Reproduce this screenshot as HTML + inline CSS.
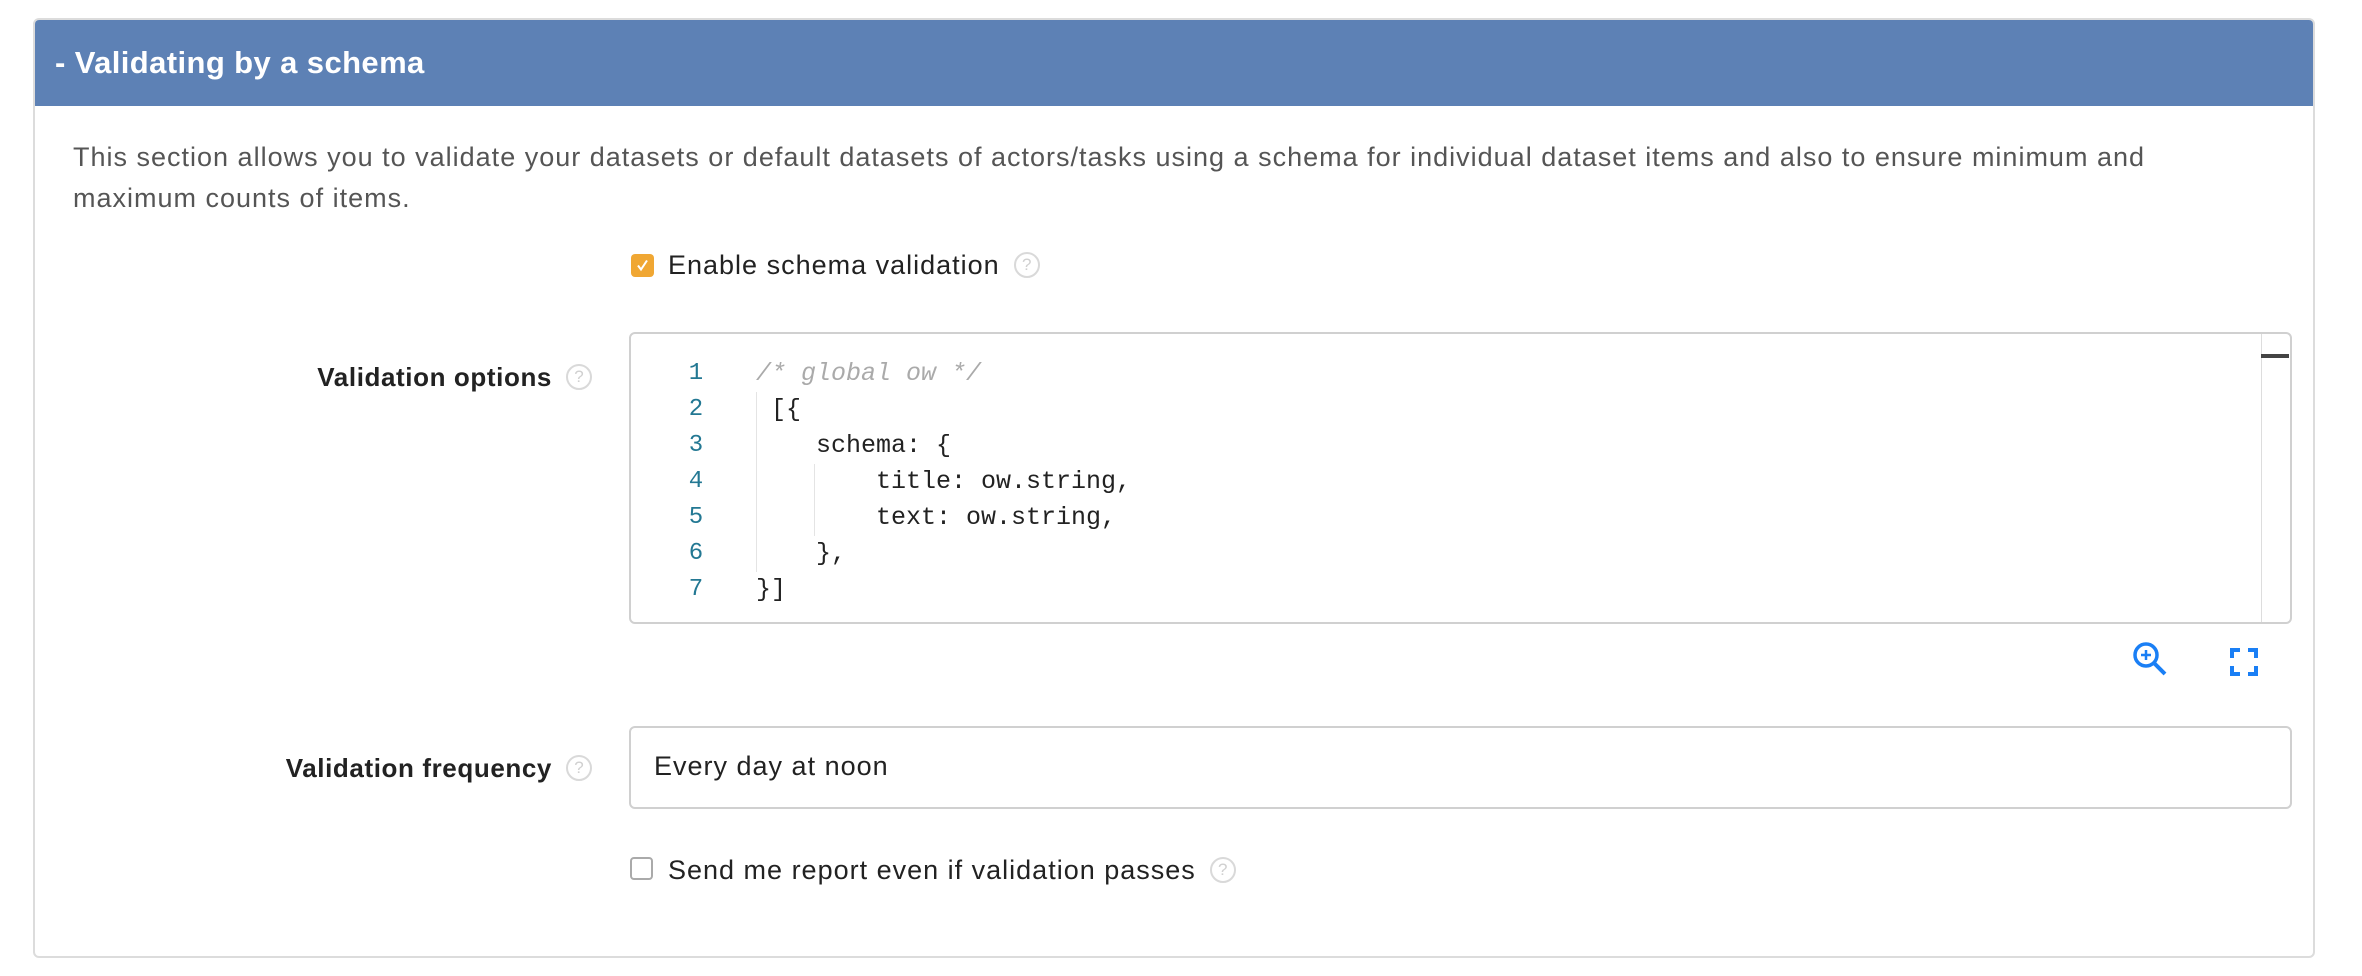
<!DOCTYPE html>
<html><head><meta charset="utf-8"><style>
*{margin:0;padding:0;box-sizing:border-box}
body{width:2362px;height:976px;background:#fff;font-family:"Liberation Sans",sans-serif;position:relative;overflow:hidden}
.a{position:absolute;white-space:nowrap}
.card{position:absolute;left:33px;top:18px;width:2282px;height:940px;border:2px solid #dcdcdc;border-radius:6px;overflow:hidden}
.hdr{position:absolute;left:0;top:0;right:0;height:86px;background:#5d81b5;color:#fff;font-weight:bold;font-size:31px;letter-spacing:0.4px;line-height:86px;padding-left:20px}
.t{font-size:27px;letter-spacing:1px;color:#222}
.q{display:inline-block;vertical-align:middle;margin-left:14px;margin-top:-4px;width:26px;height:26px;border:2px solid #d9d9d9;border-radius:50%;color:#d0d0d0;font-size:17px;line-height:22px;text-align:center;font-weight:normal;letter-spacing:0}
.lbl{position:absolute;right:calc(2362px - 592px);font-weight:bold;font-size:26px;letter-spacing:0.6px;color:#222;white-space:nowrap}
.code{position:absolute;font-family:"Liberation Mono",monospace;font-size:25px;color:#222;white-space:pre}
.ln{position:absolute;left:676px;width:40px;text-align:center;font-family:"Liberation Mono",monospace;font-size:24px;color:#237893}
</style></head><body>
<div class="card"><div class="hdr">- Validating by a schema</div></div>
<div class="a t" style="left:73px;top:137px;color:#555;line-height:41px">This section allows you to validate your datasets or default datasets of actors/tasks using a schema for individual dataset items and also to ensure minimum and<br>maximum counts of items.</div>

<div class="a" style="left:631px;top:254px;width:23px;height:23px;background:#f0a733;border-radius:4px"></div>
<svg class="a" style="left:631px;top:254px" width="23" height="23"><path d="M7 11.5l3 4 6-9" stroke="#fff" stroke-width="2" fill="none"/></svg>
<div class="a t" style="left:668px;top:250px">Enable schema validation<span class="q">?</span></div>

<div class="lbl" style="top:362px">Validation options<span class="q">?</span></div>

<div class="a" style="left:629px;top:332px;width:1663px;height:292px;border:2px solid #d0d0d0;border-radius:6px"></div>
<div class="a" style="left:2261px;top:334px;width:1px;height:288px;background:#ddd"></div>
<div class="a" style="left:2261px;top:354px;width:28px;height:4px;background:#444"></div>
<div class="a" style="left:756px;top:392px;width:1px;height:180px;background:#e4e4e4"></div>
<div class="a" style="left:814px;top:464px;width:1px;height:72px;background:#e4e4e4"></div>
<div class="ln" style="top:360px">1</div><div class="ln" style="top:396px">2</div><div class="ln" style="top:432px">3</div><div class="ln" style="top:468px">4</div><div class="ln" style="top:504px">5</div><div class="ln" style="top:540px">6</div><div class="ln" style="top:576px">7</div>
<div class="code" style="left:756px;top:359px;color:#aaa;font-style:italic">/* global ow */</div>
<div class="code" style="left:756px;top:395px"> [{</div>
<div class="code" style="left:756px;top:431px">    schema: {</div>
<div class="code" style="left:756px;top:467px">        title: ow.string,</div>
<div class="code" style="left:756px;top:503px">        text: ow.string,</div>
<div class="code" style="left:756px;top:539px">    },</div>
<div class="code" style="left:756px;top:575px">}]</div>

<svg class="a" style="left:2132px;top:641px" width="36" height="36" viewBox="0 0 36 36"><circle cx="14" cy="14" r="11" stroke="#1a7ff5" stroke-width="3.5" fill="none"/><path d="M14 9v10M9 14h10" stroke="#1a7ff5" stroke-width="2.5"/><path d="M22 22l11 11" stroke="#1a7ff5" stroke-width="4"/></svg>
<svg class="a" style="left:2230px;top:648px" width="28" height="28" viewBox="0 0 28 28"><path d="M2 10V2h8M18 2h8v8M26 18v8h-8M10 26H2v-8" stroke="#1a7ff5" stroke-width="4" fill="none"/></svg>

<div class="lbl" style="top:753px">Validation frequency<span class="q">?</span></div>
<div class="a" style="left:629px;top:726px;width:1663px;height:83px;border:2px solid #d0d0d0;border-radius:6px"></div>
<div class="a t" style="left:654px;top:751px">Every day at noon</div>

<div class="a" style="left:630px;top:857px;width:23px;height:23px;border:2px solid #aaa;border-radius:4px"></div>
<div class="a t" style="left:668px;top:855px">Send me report even if validation passes<span class="q">?</span></div>
</body></html>
